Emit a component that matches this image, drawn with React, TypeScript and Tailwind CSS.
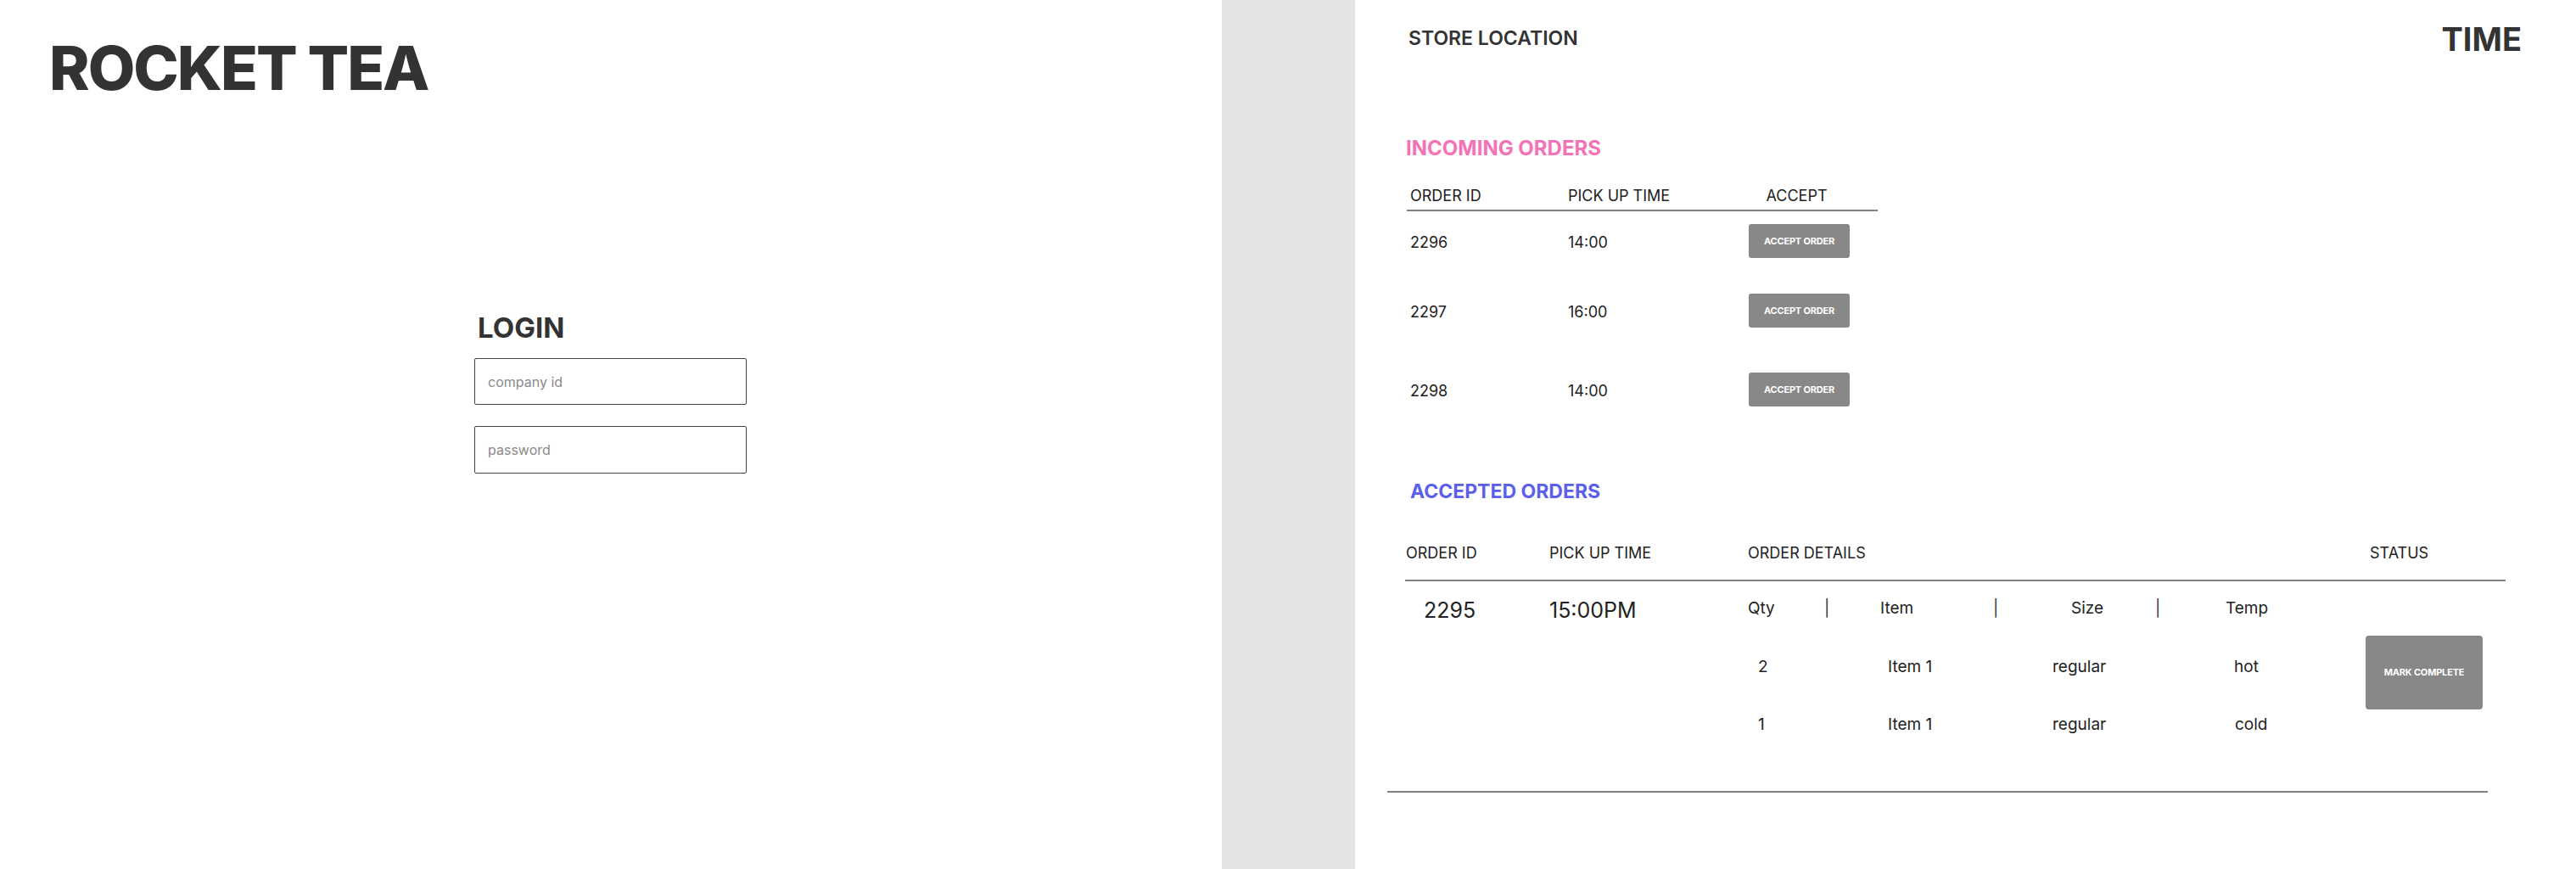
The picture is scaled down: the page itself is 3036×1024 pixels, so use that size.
import React from "react";

function AcceptBtn() {
  return (
    <button className="h-[40px] w-[119px] bg-[#888888] rounded-[3px] text-white text-[11px] font-bold leading-none tracking-[-0.2px]">
      ACCEPT ORDER
    </button>
  );
}

function IncomingRow({ id, time, mt }: { id: string; time: string; mt: string }) {
  return (
    <div className={`grid grid-cols-[190px_213px_119px_33px] items-center h-[40px] ${mt}`}>
      <div className="pl-[4px] pt-[4px] text-[18px] leading-none text-[#222]">{id}</div>
      <div className="pt-[4px] text-[18px] leading-none text-[#222]">{time}</div>
      <AcceptBtn />
      <div />
    </div>
  );
}

export default function App() {
  return (
    <div className="flex w-[3036px] h-[1024px] bg-white text-[#333] font-['Inter','Liberation_Sans',sans-serif] overflow-hidden">
      {/* Left: login */}
      <div className="w-[1440px] flex flex-col pl-[58px]">
        <h1 className="mt-[44px] text-[72px] leading-none font-extrabold tracking-[-2px] text-[#333]">ROCKET TEA</h1>
        <div className="ml-[501px] mt-[254px] flex flex-col w-[321px]">
          <h2 className="ml-[4px] text-[33px] leading-none font-bold text-[#333]">LOGIN</h2>
          <input
            placeholder="company id"
            className="mt-[19px] h-[55px] w-[321px] border border-[#444] rounded-[2px] px-[15px] text-[16px] text-[#333] placeholder:text-[#8a8a8a] outline-none"
          />
          <input
            type="password"
            placeholder="password"
            className="mt-[25px] h-[56px] w-[321px] border border-[#444] rounded-[2px] px-[15px] text-[16px] text-[#333] placeholder:text-[#8a8a8a] outline-none"
          />
        </div>
      </div>

      {/* Gray divider column */}
      <div className="w-[157px] bg-[#e4e4e4]" />

      {/* Right: orders */}
      <div className="flex-1 flex flex-col pl-[59px]">
        <div className="mt-[27px] flex justify-between items-start pr-[64px]">
          <div className="mt-[7px] ml-[4px] text-[23px] font-semibold leading-none text-[#333]">STORE LOCATION</div>
          <div className="text-[38px] font-bold leading-none text-[#333]">TIME</div>
        </div>

        <div className="mt-[98px] ml-[1px] text-[24px] font-bold leading-none text-[#f472b6]">INCOMING ORDERS</div>

        <div className="mt-[35px] ml-[2px] w-[555px]">
          <div className="grid grid-cols-[190px_213px_119px_33px] pb-[7px] border-b-2 border-[#808080] text-[18px] leading-none text-[#222]">
            <div className="pl-[4px]">ORDER ID</div>
            <div>PICK UP TIME</div>
            <div className="text-center pr-[6px]">ACCEPT</div>
            <div />
          </div>
          <IncomingRow id="2296" time="14:00" mt="mt-[15px]" />
          <IncomingRow id="2297" time="16:00" mt="mt-[42px]" />
          <IncomingRow id="2298" time="14:00" mt="mt-[53px]" />
        </div>

        <div className="mt-[89px] ml-[6px] text-[23px] font-bold leading-none text-[#5c5fea]">ACCEPTED ORDERS</div>

        <div className="mt-[52px] w-[1297px]">
          <div className="grid grid-cols-[170px_234px_728px_165px] pb-[22px] border-b-2 border-[#808080] text-[18px] leading-none text-[#222]">
            <div className="pl-[1px]">ORDER ID</div>
            <div>PICK UP TIME</div>
            <div>ORDER DETAILS</div>
            <div className="pl-[5px]">STATUS</div>
          </div>
          <div className="grid grid-cols-[170px_234px_728px_165px] h-[247px] pt-[22px] text-[#222]">
            <div className="pl-[22px] text-[25px] leading-none">2295</div>
            <div className="text-[25px] leading-none">15:00PM</div>
            <div className="flex flex-col text-[19px] leading-none">
              <div className="flex whitespace-nowrap">
                <div className="w-[90px]">Qty</div>
                <div className="w-[66px] text-[#333]">|</div>
                <div className="w-[133px]">Item</div>
                <div className="w-[92px] text-[#333]">|</div>
                <div className="w-[99px]">Size</div>
                <div className="w-[83px] text-[#333]">|</div>
                <div>Temp</div>
              </div>
              <div className="mt-[50px] flex whitespace-nowrap pl-[12px]">
                <div className="w-[153px]">2</div>
                <div className="w-[194px]">Item 1</div>
                <div className="w-[214px]">regular</div>
                <div>hot</div>
              </div>
              <div className="mt-[49px] flex whitespace-nowrap pl-[12px]">
                <div className="w-[153px]">1</div>
                <div className="w-[194px]">Item 1</div>
                <div className="w-[214px]">regular</div>
                <div className="pl-[1px]">cold</div>
              </div>
            </div>
            <div>
              <button className="mt-[42px] w-[138px] h-[87px] bg-[#888888] rounded-[4px] text-white text-[11px] font-bold leading-none tracking-[-0.2px]">
                MARK COMPLETE
              </button>
            </div>
          </div>
        </div>
        <div className="-ml-[21px] w-[1297px] h-[2px] bg-[#808080]" />
      </div>
    </div>
  );
}
